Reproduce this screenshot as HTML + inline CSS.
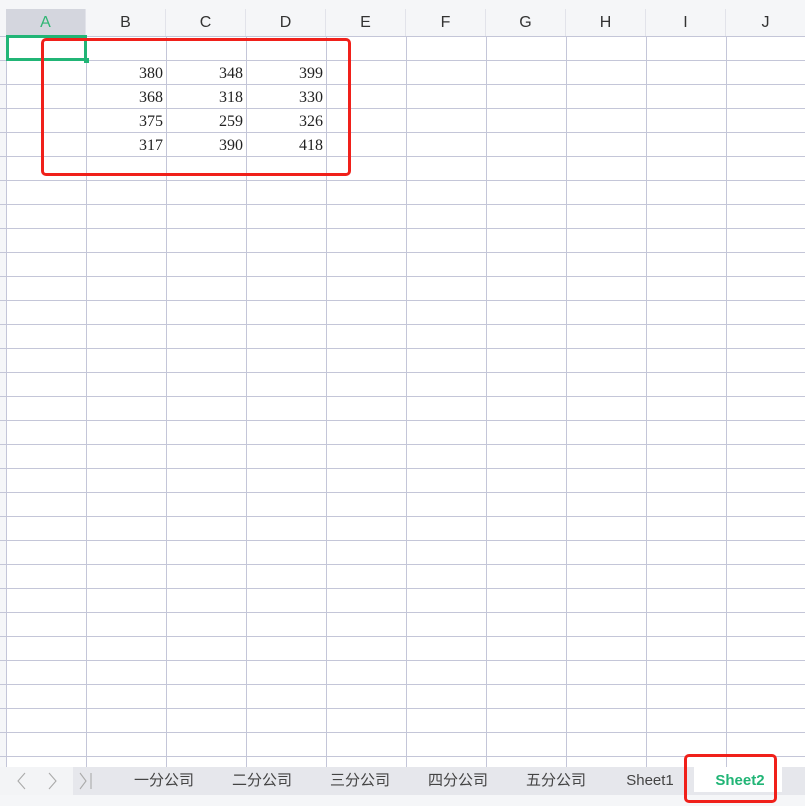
<!DOCTYPE html>
<html><head><meta charset="utf-8"><style>
body{margin:0;width:805px;height:806px;overflow:hidden;background:#fff;position:relative;font-family:"Liberation Sans","Noto Sans CJK SC",sans-serif}
.a{position:absolute}
.hd{position:absolute;top:9px;height:27px;line-height:27px;text-align:center;font-size:16px;color:#333;background:#f5f6f8;border-right:1px solid #e2e3ea;box-sizing:border-box}
.num{position:absolute;width:80px;text-align:right;font-family:"Liberation Serif",serif;font-size:16px;color:#222}
.tab{position:absolute;top:767px;height:28px;line-height:28px;font-size:15px;color:#444;text-align:center}
</style></head><body>
<div class="a" style="left:0;top:0;width:805px;height:9px;background:#f5f6f8"></div>
<div class="a" style="left:0;top:9px;width:6px;height:760px;background:#f5f6f8"></div>
<div class="hd" style="left:6px;width:80px;background:#d4d6de;color:#2fb573">A</div>
<div class="hd" style="left:86px;width:80px">B</div>
<div class="hd" style="left:166px;width:80px">C</div>
<div class="hd" style="left:246px;width:80px">D</div>
<div class="hd" style="left:326px;width:80px">E</div>
<div class="hd" style="left:406px;width:80px">F</div>
<div class="hd" style="left:486px;width:80px">G</div>
<div class="hd" style="left:566px;width:80px">H</div>
<div class="hd" style="left:646px;width:80px">I</div>
<div class="hd" style="left:726px;width:80px">J</div>
<svg class="a" style="left:0;top:36px" width="805" height="733">
<g stroke="#c4c6d8" stroke-width="1" shape-rendering="crispEdges">
<line x1="6.5" y1="0" x2="6.5" y2="733"/>
<line x1="86.5" y1="0" x2="86.5" y2="733"/>
<line x1="166.5" y1="0" x2="166.5" y2="733"/>
<line x1="246.5" y1="0" x2="246.5" y2="733"/>
<line x1="326.5" y1="0" x2="326.5" y2="733"/>
<line x1="406.5" y1="0" x2="406.5" y2="733"/>
<line x1="486.5" y1="0" x2="486.5" y2="733"/>
<line x1="566.5" y1="0" x2="566.5" y2="733"/>
<line x1="646.5" y1="0" x2="646.5" y2="733"/>
<line x1="726.5" y1="0" x2="726.5" y2="733"/>
<line x1="0" y1="0.5" x2="805" y2="0.5"/>
<line x1="0" y1="24.5" x2="805" y2="24.5"/><line x1="0" y1="48.5" x2="805" y2="48.5"/><line x1="0" y1="72.5" x2="805" y2="72.5"/><line x1="0" y1="96.5" x2="805" y2="96.5"/><line x1="0" y1="120.5" x2="805" y2="120.5"/><line x1="0" y1="144.5" x2="805" y2="144.5"/><line x1="0" y1="168.5" x2="805" y2="168.5"/><line x1="0" y1="192.5" x2="805" y2="192.5"/><line x1="0" y1="216.5" x2="805" y2="216.5"/><line x1="0" y1="240.5" x2="805" y2="240.5"/><line x1="0" y1="264.5" x2="805" y2="264.5"/><line x1="0" y1="288.5" x2="805" y2="288.5"/><line x1="0" y1="312.5" x2="805" y2="312.5"/><line x1="0" y1="336.5" x2="805" y2="336.5"/><line x1="0" y1="360.5" x2="805" y2="360.5"/><line x1="0" y1="384.5" x2="805" y2="384.5"/><line x1="0" y1="408.5" x2="805" y2="408.5"/><line x1="0" y1="432.5" x2="805" y2="432.5"/><line x1="0" y1="456.5" x2="805" y2="456.5"/><line x1="0" y1="480.5" x2="805" y2="480.5"/><line x1="0" y1="504.5" x2="805" y2="504.5"/><line x1="0" y1="528.5" x2="805" y2="528.5"/><line x1="0" y1="552.5" x2="805" y2="552.5"/><line x1="0" y1="576.5" x2="805" y2="576.5"/><line x1="0" y1="600.5" x2="805" y2="600.5"/><line x1="0" y1="624.5" x2="805" y2="624.5"/><line x1="0" y1="648.5" x2="805" y2="648.5"/><line x1="0" y1="672.5" x2="805" y2="672.5"/><line x1="0" y1="696.5" x2="805" y2="696.5"/><line x1="0" y1="720.5" x2="805" y2="720.5"/>
</g></svg>
<div class="a" style="left:6px;top:35px;width:81px;height:26px;border:3px solid #21b576;box-sizing:border-box"></div>
<div class="a" style="left:84px;top:58px;width:5px;height:5px;background:#21b576"></div>
<div class="num" style="left:83px;top:65px">380</div><div class="num" style="left:163px;top:65px">348</div><div class="num" style="left:243px;top:65px">399</div>
<div class="num" style="left:83px;top:89px">368</div><div class="num" style="left:163px;top:89px">318</div><div class="num" style="left:243px;top:89px">330</div>
<div class="num" style="left:83px;top:113px">375</div><div class="num" style="left:163px;top:113px">259</div><div class="num" style="left:243px;top:113px">326</div>
<div class="num" style="left:83px;top:137px">317</div><div class="num" style="left:163px;top:137px">390</div><div class="num" style="left:243px;top:137px">418</div>
<div class="a" style="left:41px;top:38px;width:310px;height:138px;border:3px solid #f0201a;border-radius:5px;box-sizing:border-box"></div>
<div class="a" style="left:0;top:767px;width:805px;height:28px;background:#e6e7ec"></div>
<div class="a" style="left:0;top:767px;width:73px;height:28px;background:#f3f4f6"></div>
<div class="a" style="left:0;top:795px;width:805px;height:11px;background:#f5f6f8"></div>
<svg class="a" style="left:0;top:767px" width="100" height="28"><g fill="none" stroke="#aaa" stroke-width="1.1"><path d="M25 6 L18 14 L25 22"/><path d="M49 6 L56 14 L49 22"/><path d="M80 6 L86 14 L80 22"/><path d="M91 6 V22"/></g></svg>
<div class="tab" style="left:124px;width:80px">一分公司</div>
<div class="tab" style="left:222px;width:80px">二分公司</div>
<div class="tab" style="left:320px;width:80px">三分公司</div>
<div class="tab" style="left:418px;width:80px">四分公司</div>
<div class="tab" style="left:516px;width:80px">五分公司</div>
<div class="tab" style="left:610px;width:80px">Sheet1</div>
<div class="a" style="left:694px;top:767px;width:88px;height:25px;background:#fff"></div>
<div class="tab" style="left:700px;width:80px;color:#21b576;font-weight:bold">Sheet2</div>
<div class="a" style="left:684px;top:754px;width:93px;height:49px;border:3px solid #f0201a;border-radius:5px;box-sizing:border-box"></div>
</body></html>
